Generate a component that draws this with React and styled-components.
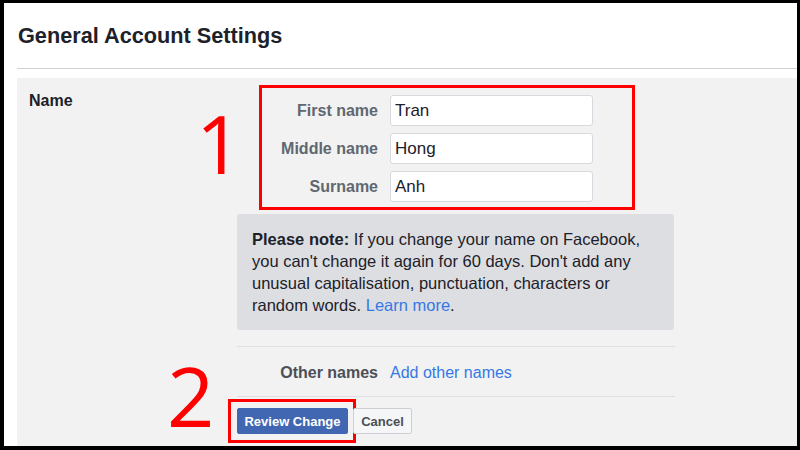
import React from 'react';
import styled, { createGlobalStyle } from 'styled-components';

const GlobalStyle = createGlobalStyle`
  html, body {
    margin: 0;
    padding: 0;
    background: #000;
  }
  body {
    font-family: "Liberation Sans", Arial, sans-serif;
  }
`;

const Screen = styled.div`
  width: 800px;
  height: 450px;
  box-sizing: border-box;
  padding: 3px 3px 4px 4px;
  background: #000;
`;

const Frame = styled.div`
  height: 100%;
  background: #fff;
  display: flex;
  flex-direction: column;
`;

const Header = styled.div`
  box-sizing: border-box;
  height: 66px;
  margin-left: 13px;
  padding: 20px 0 0 1px;
  border-bottom: 1px solid #cfd1d4;
`;

const Title = styled.h1`
  margin: 0;
  font-size: 21.7px;
  line-height: 26px;
  font-weight: 700;
  color: #1d2129;
`;

const Panel = styled.div`
  position: relative;
  flex: 1;
  margin: 9px 0 0 13px;
  background: #f2f2f2;
  display: grid;
  grid-template-columns: 220px 1fr;
`;

const SectionLabel = styled.div`
  padding: 13px 0 0 12px;
  font-size: 16px;
  line-height: 20px;
  font-weight: 700;
  color: #1d2129;
`;

const Content = styled.div`
  display: flex;
  flex-direction: column;
  align-items: flex-start;
`;

// red annotation frame around the name fields
const Highlight = styled.div`
  margin: 7px 0 0 22px;
  border: 3px solid #ff0000;
  padding: 7px 39px 5px 0;
  display: grid;
  grid-template-columns: 116px 203px;
  column-gap: 12px;
  row-gap: 7px;
  align-items: center;
`;

const FieldLabel = styled.label`
  text-align: right;
  font-size: 16px;
  font-weight: 700;
  color: #606770;
`;

const Input = styled.input`
  box-sizing: border-box;
  width: 203px;
  height: 31px;
  margin: 0;
  padding: 0 4px;
  border: 1px solid #d6d9dd;
  border-radius: 3px;
  background: #fff;
  font-family: "Liberation Sans", Arial, sans-serif;
  font-size: 17px;
  color: #1d2129;
  outline: none;
`;

const Note = styled.div`
  box-sizing: border-box;
  width: 437px;
  margin-top: 4px;
  padding: 14px 20px 14px 15px;
  border-radius: 3px;
  background: #dcdee2;
  font-size: 16.5px;
  line-height: 22px;
  color: #1d2129;

  strong {
    font-weight: 700;
  }
`;

const Link = styled.a`
  color: #3578e5;
  text-decoration: none;
  cursor: pointer;
`;

const OtherRow = styled.div`
  width: 438px;
  margin-top: 16px;
  padding: 16px 0 13px;
  border-top: 1px solid #dddfe2;
  border-bottom: 1px solid #dddfe2;
  display: flex;
  align-items: center;
  gap: 12px;
  font-size: 16px;
  line-height: 20px;
`;

const OtherLabel = styled.span`
  width: 141px;
  text-align: right;
  font-weight: 700;
  color: #4b4f56;
`;

const Actions = styled.div`
  margin-top: 11px;
  display: flex;
  gap: 5px;
`;

const Button = styled.button`
  position: relative;
  box-sizing: border-box;
  height: 26px;
  margin: 0;
  padding: 0;
  border-radius: 2px;
  white-space: nowrap;
  font-family: "Liberation Sans", Arial, sans-serif;
  font-size: 13px;
  font-weight: 700;
  cursor: pointer;
  border: 1px solid ${p => (p.$primary ? '#4267b2' : '#ccd0d5')};
  background: ${p => (p.$primary ? '#4267b2' : '#f5f6f7')};
  color: ${p => (p.$primary ? '#fff' : '#4b4f56')};
  width: ${p => p.$width}px;

  ${p =>
    p.$marked &&
    `
    &::after {
      content: '';
      position: absolute;
      inset: -10px -9px -10px -10px;
      border: 3px solid #ff0000;
      pointer-events: none;
    }
  `}
`;

// big red step numbers drawn over the panel
const Step = styled.span`
  position: absolute;
  left: ${p => p.$x}px;
  top: ${p => p.$y}px;
  font-family: "Open Sans", sans-serif;
  font-size: ${p => p.$size}px;
  line-height: 84px;
  font-weight: 400;
  color: #ff0000;
  pointer-events: none;
`;

const fields = [
  { label: 'First name', value: 'Tran' },
  { label: 'Middle name', value: 'Hong' },
  { label: 'Surname', value: 'Anh' },
];

export default function App() {
  return (
    <Screen>
      <GlobalStyle />
      <Frame>
        <Header>
          <Title>General Account Settings</Title>
        </Header>
        <Panel>
          <SectionLabel>Name</SectionLabel>
          <Content>
            <Highlight>
              {fields.map(f => (
                <React.Fragment key={f.label}>
                  <FieldLabel>{f.label}</FieldLabel>
                  <Input defaultValue={f.value} />
                </React.Fragment>
              ))}
            </Highlight>
            <Note>
              <strong>Please note:</strong> If you change your name on Facebook, you can't
              change it again for 60 days. Don't add any unusual capitalisation, punctuation,
              characters or random words. <Link>Learn more</Link>.
            </Note>
            <OtherRow>
              <OtherLabel>Other names</OtherLabel>
              <Link>Add other names</Link>
            </OtherRow>
            <Actions>
              <Button $primary $marked $width={111}>Review Change</Button>
              <Button $width={59}>Cancel</Button>
            </Actions>
          </Content>
          <Step $x={179} $y={23} $size={81}>1</Step>
          <Step $x={150} $y={275} $size={83}>2</Step>
        </Panel>
      </Frame>
    </Screen>
  );
}
